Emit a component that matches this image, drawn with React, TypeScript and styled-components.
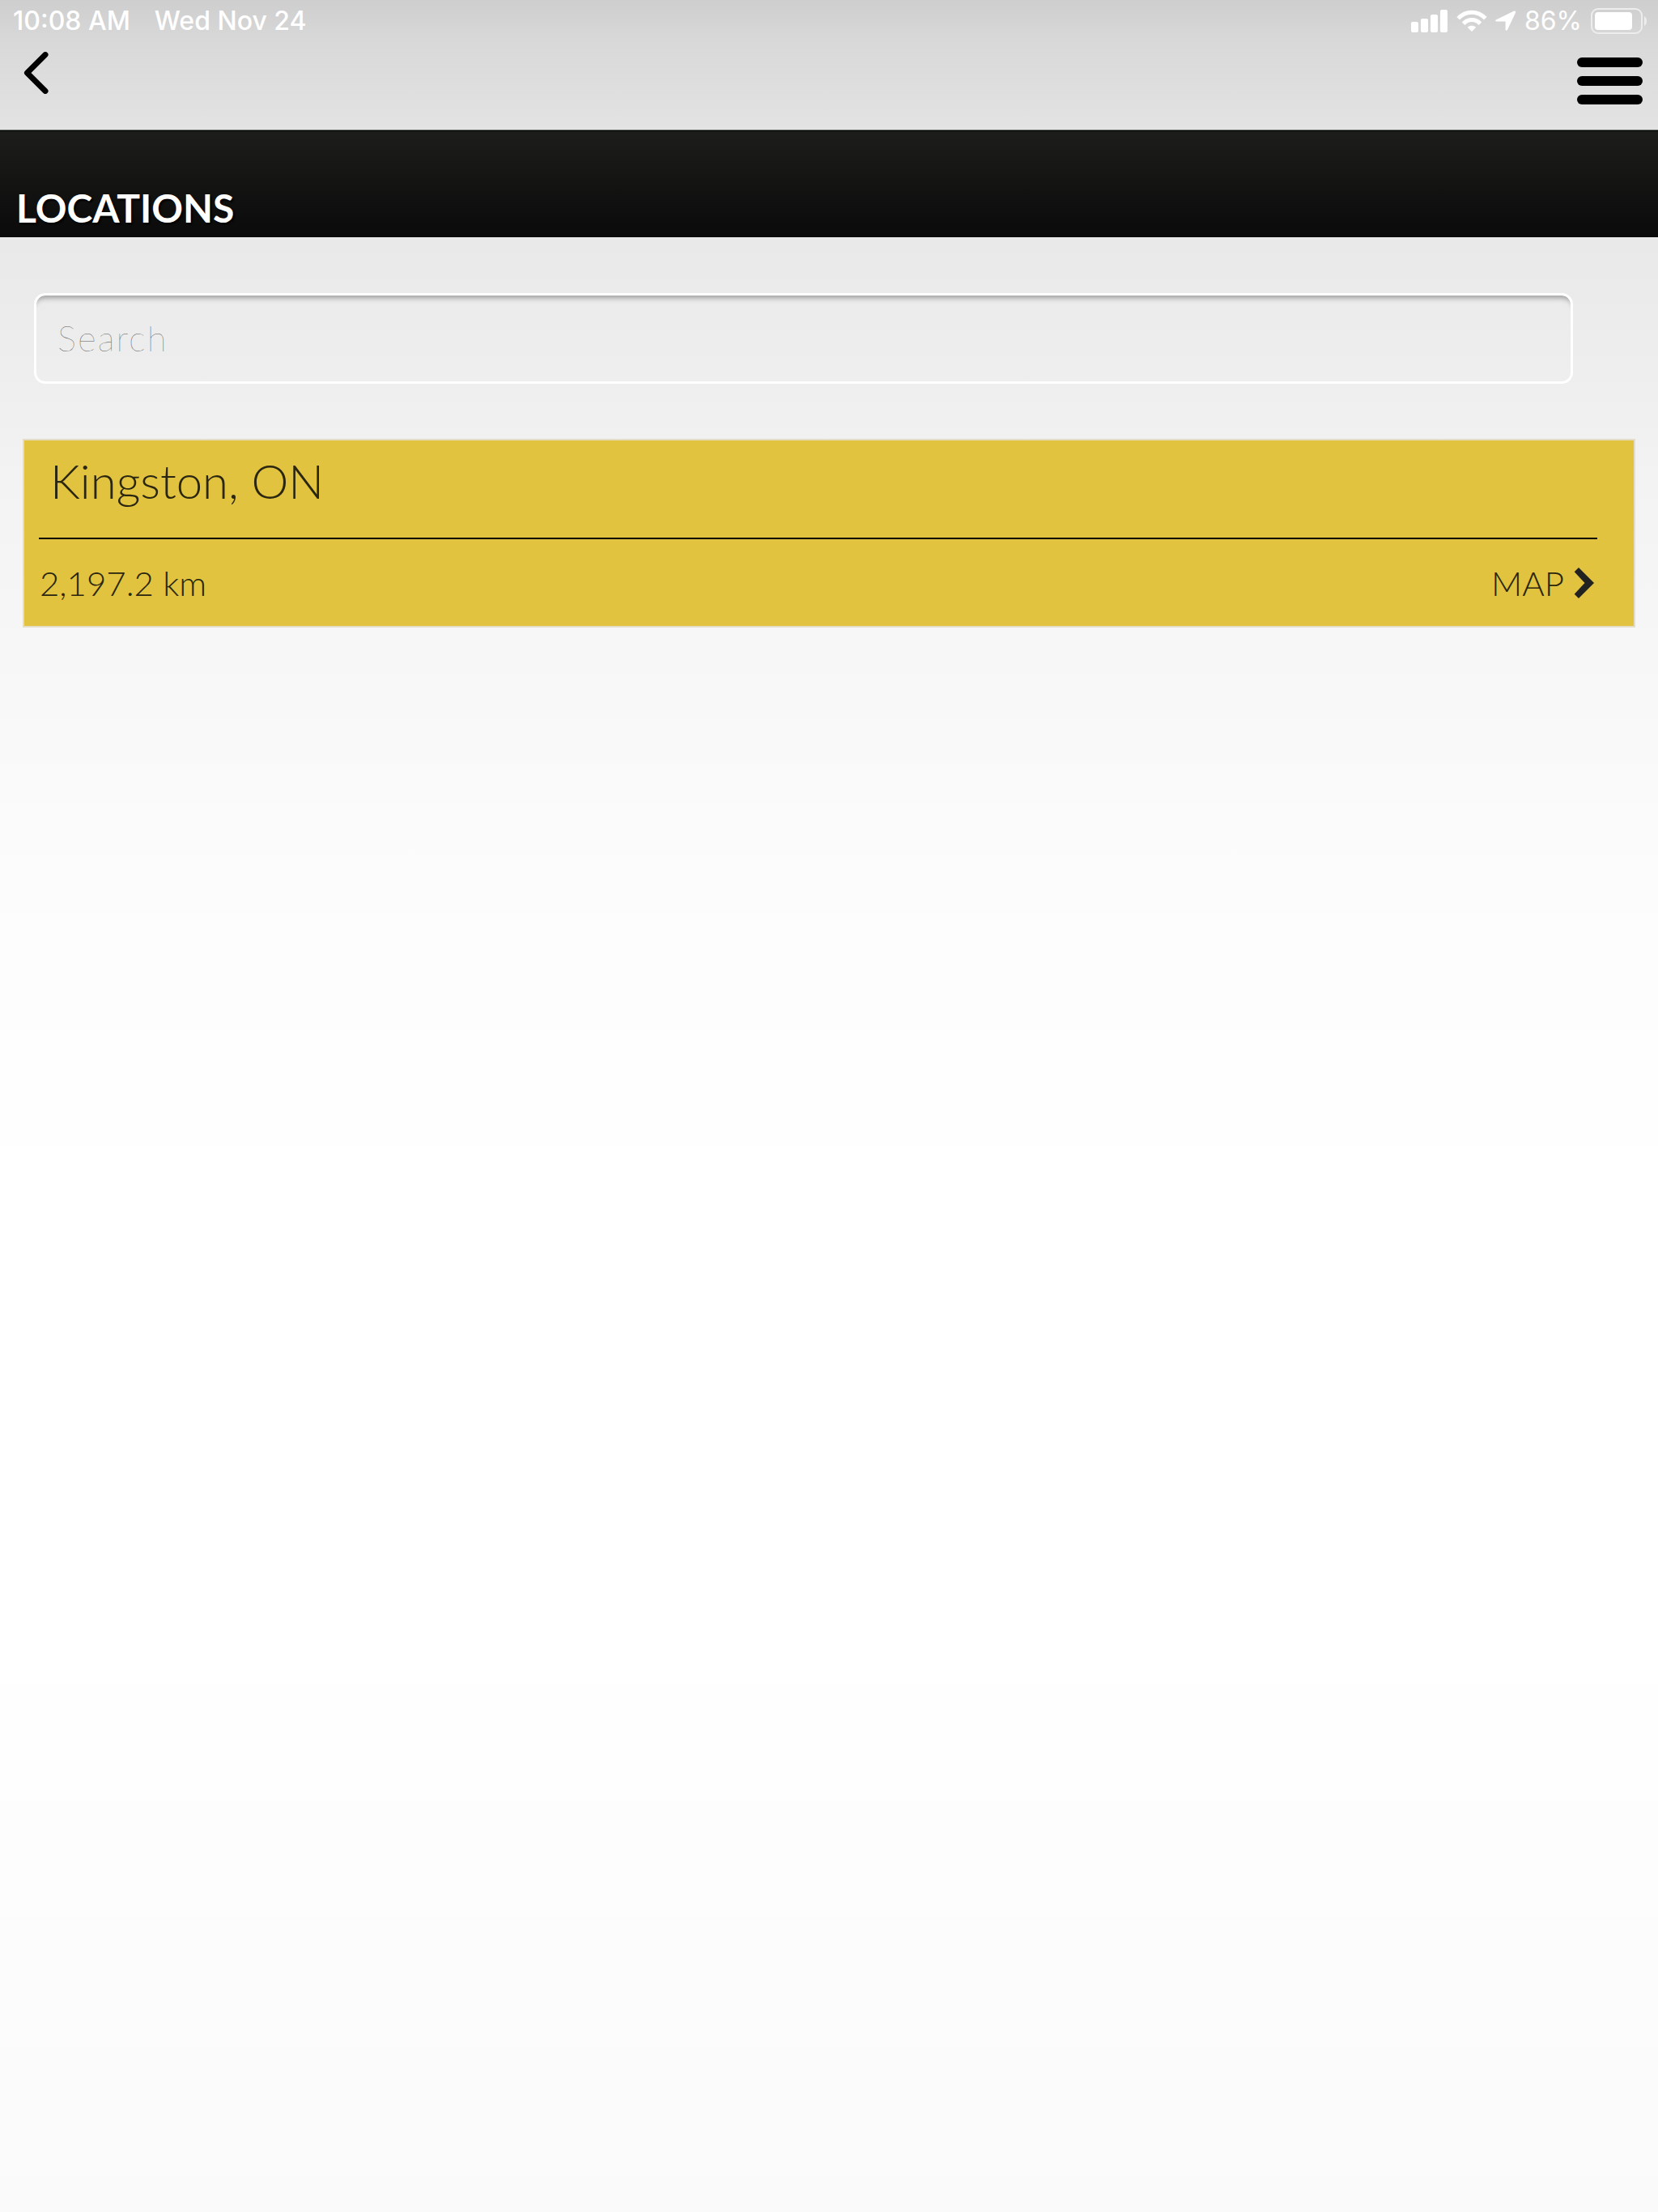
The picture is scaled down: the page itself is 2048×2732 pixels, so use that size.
import React from "react";
import styled, { createGlobalStyle } from "styled-components";

const GlobalStyle = createGlobalStyle`
  *, *::before, *::after {
    box-sizing: border-box;
  }
  body {
    margin: 0;
    background: #fafafa;
    color: #2a260f;
    font-family: Lato, "Open Sans", sans-serif;
  }
`;

const Page = styled.div`
  min-height: 100vh;
  background: linear-gradient(
    to bottom,
    #cecece 0%,
    #d9d9d9 2%,
    #e3e3e3 6%,
    #e9e9e9 11%,
    #eeeeee 17%,
    #f3f3f3 22%,
    #f7f7f7 30%,
    #fcfcfc 40%,
    #ffffff 56%,
    #ffffff 72%,
    #fcfcfc 88%,
    #fafafa 100%
  );
`;

const Header = styled.header`
  height: 161px;
  border-bottom: 1px solid #7c807c;
`;

const StatusBar = styled.div`
  display: flex;
  align-items: center;
  justify-content: space-between;
  height: 52px;
  padding: 0 12px 0 16px;
  color: #ffffff;
  font-family: Inter, sans-serif;
  font-size: 32px;
  font-weight: 500;
  line-height: 52px;
`;

const StatusGroup = styled.div<{ $gap: number }>`
  display: flex;
  align-items: center;
  gap: ${(p) => p.$gap}px;
`;

const Battery = styled.span`
  font-weight: 400;
`;

const NavBar = styled.nav`
  display: flex;
  align-items: flex-start;
  justify-content: space-between;
  padding: 12px 18px 0 24px;
`;

const IconButton = styled.button`
  display: flex;
  padding: 0;
  border: 0;
  background: none;
  color: #000000;
  cursor: pointer;
`;

const MenuButton = styled(IconButton)`
  padding-top: 6px;
`;

const TitleBar = styled.div`
  display: flex;
  align-items: flex-end;
  height: 132px;
  padding: 0 20px 6px;
  border-top: 1px solid #000000;
  background: linear-gradient(#1d1d1b, #0a0a0a);
`;

const Title = styled.h1`
  margin: 0;
  color: #ffffff;
  font-size: 48px;
  font-weight: 700;
  line-height: 60px;
  text-shadow: 2px 2px 2px #000000;
`;

const Content = styled.main`
  padding: 69px 28px 0;
`;

const SearchForm = styled.form`
  padding: 0 77px 0 14px;
`;

const SearchInput = styled.input`
  display: block;
  width: 100%;
  height: 112px;
  padding: 0 26px 2px;
  border: 3px solid #ffffff;
  border-radius: 14px;
  outline: 0;
  appearance: none;
  background: transparent;
  box-shadow: inset 0 9px 6px -6px #9c9c9c;
  color: #444444;
  font-family: inherit;
  font-size: 44px;
  font-weight: 100;
  letter-spacing: 2px;

  &::placeholder {
    color: #5c5c5c;
    opacity: 1;
  }
`;

const LocationList = styled.ul`
  margin: 68px 0 0;
  padding: 0;
  list-style: none;
`;

const LocationCard = styled.li`
  height: 233px;
  padding: 0 45px 0 18px;
  border: 2px solid #e4dcc4;
  background: #e1c33f;
`;

const LocationName = styled.h2`
  margin: 0;
  padding: 13px 14px 33px;
  border-bottom: 2px solid #000000;
  font-size: 58px;
  font-weight: 300;
  line-height: 74px;
`;

const LocationDetails = styled.div`
  display: flex;
  align-items: center;
  justify-content: space-between;
  padding: 24px 3px 0 1px;
  font-size: 42px;
  font-weight: 300;
  line-height: 60px;
`;

const MapLink = styled.a`
  display: flex;
  align-items: center;
  gap: 12px;
  color: inherit;
  text-decoration: none;
`;

function SignalIcon() {
  return (
    <svg width="46" height="28" viewBox="0 0 46 28" fill="currentColor" aria-hidden="true">
      <rect x="0" y="15" width="9" height="13" rx="2" />
      <rect x="12" y="11" width="9" height="17" rx="2" />
      <rect x="24" y="6" width="9" height="22" rx="2" />
      <rect x="36" y="0" width="9" height="28" rx="2" />
    </svg>
  );
}

function WifiIcon() {
  return (
    <svg width="38" height="28" viewBox="0 0 38 28" fill="none" stroke="currentColor" strokeWidth="5" aria-hidden="true">
      <path d="M2.2 10.8C11.5 .6 26.5 .6 35.8 10.8" />
      <path d="M8.6 17.2C14.4 11 23.6 11 29.4 17.2" />
      <path d="M19 27l-5.2-5.3c3-2.6 7.400-2.600 10.400 0z" fill="currentColor" stroke="none" />
    </svg>
  );
}

function LocationArrowIcon() {
  return (
    <svg width="26" height="26" viewBox="0 0 26 26" fill="currentColor" aria-hidden="true">
      <path d="M1.300 11.300 22.800.7c1.600-.7 2.900.5 2.200 2.100L15.200 23.600c-.8 1.700-2.600 1.500-2.600-.4V13.600H2c-2.200 0-2.400-1.500-.7-2.300z" />
    </svg>
  );
}

function BatteryIcon() {
  return (
    <svg width="72" height="34" viewBox="0 0 72 34" aria-hidden="true">
      <rect x="2" y="2" width="62" height="30" rx="8" fill="none" stroke="#ededed" strokeWidth="2" />
      <rect x="6" y="6" width="46" height="22" rx="4" fill="#ffffff" />
      <path d="M67 11c4 2 4 10 0 12z" fill="#ededed" />
    </svg>
  );
}

function BackIcon() {
  return (
    <svg width="40" height="52" viewBox="0 0 40 52" fill="none" stroke="currentColor" strokeWidth="7" aria-hidden="true">
      <path d="M32 3.500 9.500 26 32 48.500" strokeLinecap="round" strokeLinejoin="round" />
    </svg>
  );
}

function MenuIcon() {
  return (
    <svg width="82" height="60" viewBox="0 0 82 60" fill="currentColor" aria-hidden="true">
      <rect x="0" y="1" width="81" height="12" rx="6" />
      <rect x="0" y="24" width="81" height="12" rx="6" />
      <rect x="0" y="47" width="81" height="12" rx="6" />
    </svg>
  );
}

function ChevronIcon() {
  return (
    <svg width="26" height="40" viewBox="0 0 26 40" fill="#20231f" aria-hidden="true">
      <path d="M6 1 25 20 6 39 .7 33.700 13.500 20 .7 6.300z" />
    </svg>
  );
}

const locations = [{ name: "Kingston, ON", distance: "2,197.2 km" }];

export default function App() {
  return (
    <Page>
      <GlobalStyle />
      <Header>
        <StatusBar>
          <StatusGroup $gap={30}>
            <span>10:08 AM</span>
            <span>Wed Nov 24</span>
          </StatusGroup>
          <StatusGroup $gap={10}>
            <SignalIcon />
            <WifiIcon />
            <LocationArrowIcon />
            <Battery>86%</Battery>
            <BatteryIcon />
          </StatusGroup>
        </StatusBar>
        <NavBar>
          <IconButton type="button" aria-label="Back">
            <BackIcon />
          </IconButton>
          <MenuButton type="button" aria-label="Menu">
            <MenuIcon />
          </MenuButton>
        </NavBar>
      </Header>
      <TitleBar>
        <Title>LOCATIONS</Title>
      </TitleBar>
      <Content>
        <SearchForm role="search" onSubmit={(e) => e.preventDefault()}>
          <SearchInput type="search" placeholder="Search" aria-label="Search" />
        </SearchForm>
        <LocationList>
          {locations.map((location) => (
            <LocationCard key={location.name}>
              <LocationName>{location.name}</LocationName>
              <LocationDetails>
                <span>{location.distance}</span>
                <MapLink href="#map">
                  MAP
                  <ChevronIcon />
                </MapLink>
              </LocationDetails>
            </LocationCard>
          ))}
        </LocationList>
      </Content>
    </Page>
  );
}
